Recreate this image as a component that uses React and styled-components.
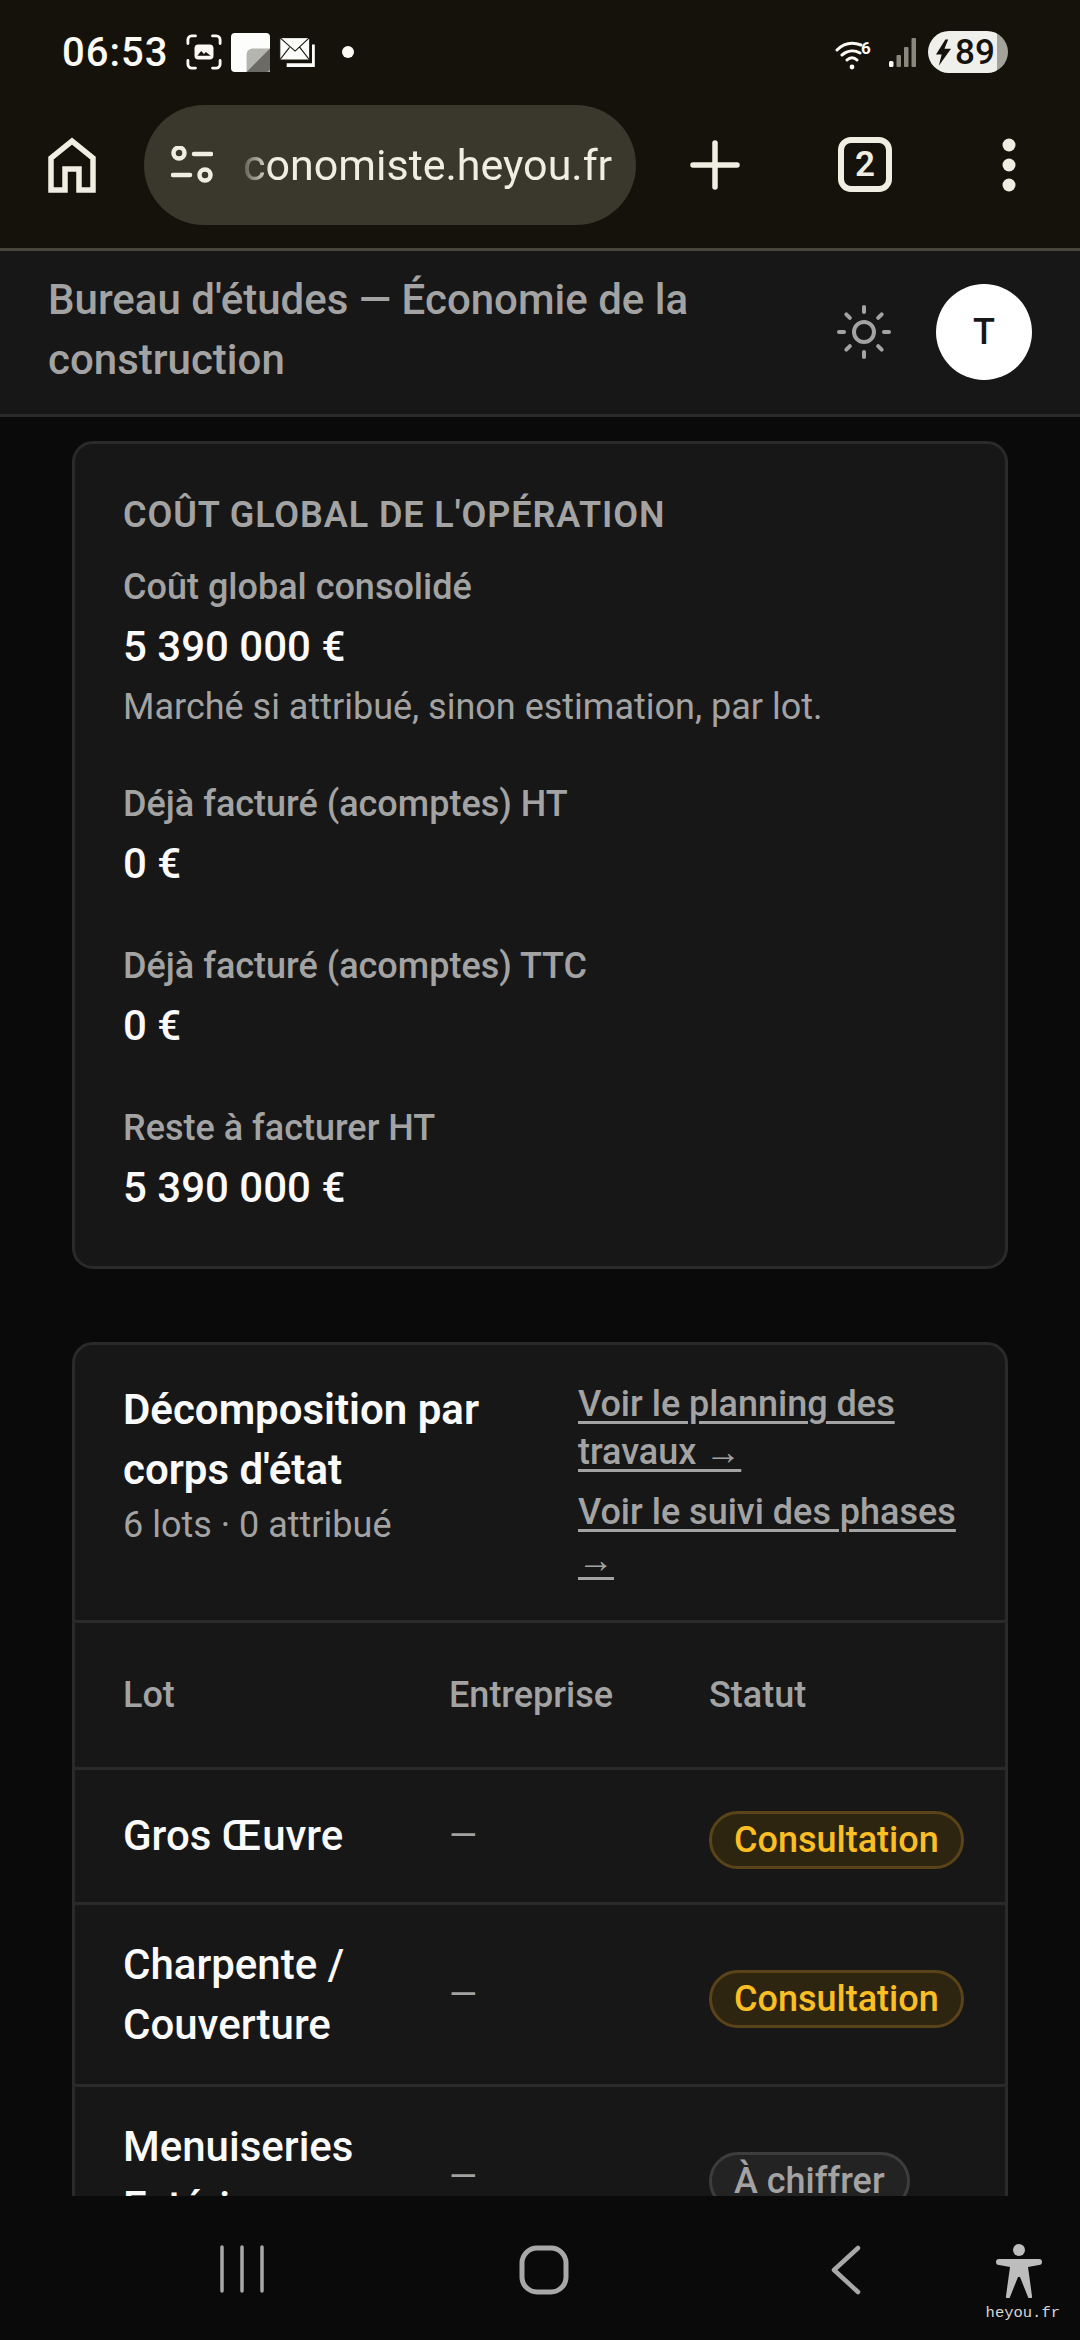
import React from "react";
import styled, { createGlobalStyle } from "styled-components";
import { Sun } from "lucide-react";

const GlobalStyle = createGlobalStyle`
    html, body {
        margin: 0;
        padding: 0;
        background: #0a0a0a;
    }
    * {
        box-sizing: border-box;
    }
`;

const Shell = styled.div`
    width: 1080px;
    height: 2340px;
    display: flex;
    flex-direction: column;
    overflow: hidden;
    position: relative;
    background: #0a0a0a;
    font-family: Roboto, "Liberation Sans", sans-serif;
`;

const Chrome = styled.div`
    height: 251px;
    flex: none;
    background: #14120a;
    border-bottom: 3px solid #4a453c;
`;

const StatusBar = styled.div`
    height: 105px;
    padding: 28px 72px 0 62px;
    display: flex;
    align-items: flex-start;
    justify-content: space-between;
`;

const StatusGroup = styled.div`
    display: flex;
    align-items: center;
    height: 48px;
`;

const Clock = styled.span`
    font-size: 40px;
    font-weight: 500;
    letter-spacing: 1px;
    color: #fbfaf5;
    margin-right: 18px;
`;

const BatteryPill = styled.div`
    width: 80px;
    height: 42px;
    border-radius: 21px;
    margin-left: 12px;
    display: flex;
    align-items: center;
    gap: 4px;
    padding-left: 8px;
    font-size: 35px;
    font-weight: 500;
    color: #14120a;
    background: linear-gradient(to right, #efefeb 0, #efefeb 69px, #a3a39c 69px);
`;

const Toolbar = styled.div`
    height: 143px;
    padding: 0 0 24px 48px;
    display: flex;
    align-items: center;
`;

const UrlPill = styled.div`
    width: 492px;
    height: 120px;
    margin-left: 48px;
    border-radius: 60px;
    background: #3a372c;
    padding-left: 27px;
    display: flex;
    align-items: center;
    gap: 30px;
`;

const UrlText = styled.span`
    font-size: 43px;
    color: #f0ede2;
    white-space: nowrap;
    -webkit-mask-image: linear-gradient(to right, rgba(0, 0, 0, 0.2), #000 28px);
    mask-image: linear-gradient(to right, rgba(0, 0, 0, 0.2), #000 28px);
`;

const ToolButton = styled.div`
    width: ${(p) => p.$width}px;
    margin-left: ${(p) => p.$left}px;
    display: flex;
    align-items: center;
    justify-content: center;
    flex: none;
`;

const TabCount = styled.div`
    width: 54px;
    height: 55px;
    border: 6px solid #f0ede2;
    border-radius: 13px;
    color: #f0ede2;
    font-size: 35px;
    font-weight: 600;
    display: flex;
    align-items: center;
    justify-content: center;
`;

const AppHeader = styled.header`
    height: 166px;
    flex: none;
    background: #171717;
    border-bottom: 3px solid #2a2a2a;
    padding: 0 48px 2px;
    display: flex;
    align-items: center;
`;

const AppTitle = styled.h1`
    flex: 1;
    margin: 0 0 3px;
    max-width: 700px;
    font-size: 42px;
    line-height: 60px;
    font-weight: 500;
    color: #a3a3a3;
`;

const SunButton = styled.div`
    margin-left: auto;
    margin-right: 42px;
    width: 60px;
    height: 60px;
    color: #a3a3a3;
`;

const Avatar = styled.div`
    width: 96px;
    height: 96px;
    border-radius: 50%;
    background: #fff;
    color: #171717;
    font-size: 36px;
    font-weight: 500;
    display: flex;
    align-items: center;
    justify-content: center;
`;

const Main = styled.main`
    flex: 1;
    min-height: 0;
    overflow: hidden;
    padding: 24px 72px 0;
    display: flex;
    flex-direction: column;
    gap: 73px;
`;

const Card = styled.section`
    flex: none;
    background: #171717;
    border: 3px solid #2a2a2a;
    border-radius: 21px;
`;

const SummaryBody = styled.div`
    padding: 45px 48px 45px;
`;

const SummaryTitle = styled.h2`
    margin: 0 0 20px;
    font-size: 36px;
    line-height: 52px;
    font-weight: 600;
    letter-spacing: 0.9px;
    text-transform: uppercase;
    color: #a3a3a3;
`;

const Stat = styled.div`
    margin-bottom: 43px;
    &:last-child {
        margin-bottom: 0;
    }
`;

const StatLabel = styled.div`
    font-size: 36px;
    line-height: 52px;
    font-weight: 500;
    color: #a3a3a3;
`;

const StatValue = styled.div`
    font-size: 42px;
    line-height: 67px;
    font-weight: 500;
    color: #fafafa;
`;

const StatNote = styled.div`
    font-size: 36px;
    line-height: 55px;
    color: #a3a3a3;
`;

const LotsHeader = styled.div`
    height: 278px;
    padding: 35px 27px 0 48px;
    display: flex;
    justify-content: space-between;
    border-bottom: 3px solid #2a2a2a;
`;

const LotsTitle = styled.h2`
    margin: 0;
    width: 380px;
    font-size: 42px;
    line-height: 60px;
    font-weight: 600;
    color: #fafafa;
`;

const LotsSub = styled.div`
    font-size: 36px;
    line-height: 50px;
    color: #a3a3a3;
`;

const Links = styled.div`
    width: 400px;
    display: flex;
    flex-direction: column;
    gap: 12px;
`;

const LotLink = styled.a`
    font-size: 36px;
    line-height: 48px;
    font-weight: 500;
    color: #a3a3a3;
    text-decoration: underline;
    text-decoration-thickness: 3px;
    text-underline-offset: 5px;
`;

const Row = styled.div`
    display: grid;
    grid-template-columns: 326px 260px 1fr;
    align-items: center;
    padding-left: 48px;
    min-height: ${(p) => p.$height}px;
    border-bottom: 3px solid #2a2a2a;
`;

const HeadCell = styled.div`
    font-size: 36px;
    font-weight: 500;
    color: #a3a3a3;
`;

const LotName = styled.div`
    font-size: 42px;
    line-height: 60px;
    font-weight: 500;
    color: #fafafa;
    width: 300px;
`;

const Dash = styled.div`
    font-size: 36px;
    color: #a3a3a3;
`;

const Badge = styled.span`
    justify-self: start;
    height: 58px;
    margin-top: 8px;
    padding: 0 22px;
    border-radius: 29px;
    font-size: 36px;
    font-weight: 500;
    display: inline-flex;
    align-items: center;
    white-space: nowrap;
    color: ${(p) => (p.$tone === "amber" ? "#fbbf24" : "#a3a3a3")};
    background: ${(p) => (p.$tone === "amber" ? "#2e2511" : "#232323")};
    border: 3px solid ${(p) => (p.$tone === "amber" ? "#5a4318" : "#3d3d3d")};
`;

const NavBar = styled.nav`
    height: 144px;
    flex: none;
    background: #0a0a0a;
    padding: 49px 0 0 212px;
    display: flex;
    align-items: flex-start;
    gap: 242px;
`;

const NavItem = styled.div`
    width: 60px;
    height: 50px;
    display: flex;
    justify-content: center;
    color: #a8a8a8;
`;

const AccessBadge = styled.div`
    position: absolute;
    left: 995px;
    top: 2244px;
    width: 48px;
    height: 54px;
`;

const Watermark = styled.span`
    position: absolute;
    right: 20px;
    bottom: 19px;
    font-family: "Liberation Mono", "DejaVu Sans Mono", monospace;
    font-size: 15.5px;
    line-height: 16px;
    color: #d6d6d6;
`;

const Dot = styled.span`
    width: 12px;
    height: 12px;
    border-radius: 50%;
    background: #fbfaf5;
    margin-left: 27px;
`;

const lots = [
    { name: "Gros Œuvre", height: 135, tone: "amber", status: "Consultation" },
    { name: "Charpente / Couverture", height: 182, tone: "amber", status: "Consultation" },
    { name: "Menuiseries Extérieures", height: 182, tone: "grey", status: "À chiffrer" },
];

const stats = [
    { label: "Déjà facturé (acomptes) HT", value: "0 €" },
    { label: "Déjà facturé (acomptes) TTC", value: "0 €" },
    { label: "Reste à facturer HT", value: "5 390 000 €" },
];

const GalleryIcon = () => (
    <svg width="36" height="36" viewBox="0 0 38 38" fill="none" stroke="#fbfaf5" strokeWidth="3" strokeLinecap="round">
        <path d="M2 10V6a4 4 0 0 1 4-4h4M28 2h4a4 4 0 0 1 4 4v4M36 28v4a4 4 0 0 1-4 4h-4M10 36H6a4 4 0 0 1-4-4v-4" />
        <rect x="9" y="11" width="20" height="16" rx="4" fill="#fbfaf5" stroke="none" />
        <path d="M12 23l4-5 3 3 2-2 5 4z" fill="#14120a" stroke="none" />
    </svg>
);

const NoteIcon = () => (
    <svg width="39" height="39" viewBox="0 0 40 40" style={{ marginLeft: 9 }}>
        <rect width="40" height="40" rx="4" fill="#fdfdfb" />
        <path d="M16 40V22a6 6 0 0 1 6-6h18v24z" fill="#b5b5b0" />
        <path d="M40 16v20a4 4 0 0 1-4 4H16z" fill="#6b6a65" />
    </svg>
);

const MailIcon = () => (
    <svg width="36" height="30" viewBox="0 0 38 32" style={{ marginLeft: 9 }}>
        <path d="M8 28h27V8h3v24H8z" fill="#fdfdfb" />
        <rect x="0.6" y="0.6" width="32" height="24" fill="#fdfdfb" stroke="#14120a" strokeWidth="1.2" />
        <path d="M1 1l16 14L32 1M1 24l10-13M32 24L22 11" fill="none" stroke="#14120a" strokeWidth="1.2" />
    </svg>
);

const WifiIcon = () => (
    <svg width="38" height="36" viewBox="0 -6 38 36" fill="none" stroke="#fbfaf5" strokeWidth="3" strokeLinecap="round">
        <path d="M2 10C9 3 18 2 26 5M7 15c6-5 13-5 18-2M12 20c3-3 7-3 10 0" />
        <circle cx="17" cy="27" r="2.4" fill="#fbfaf5" stroke="none" />
        <text x="26" y="14" fontSize="17" fontWeight="700" fill="#fbfaf5" stroke="none" fontFamily="Roboto">6</text>
    </svg>
);

const SignalIcon = () => (
    <svg width="27" height="30" viewBox="0 0 27 30" style={{ marginLeft: 16 }}>
        <rect x="0" y="24" width="4.5" height="6" rx="1.5" fill="#fbfaf5" />
        <rect x="7.5" y="18" width="4.5" height="12" rx="1" fill="#8a877d" />
        <rect x="15" y="10" width="4.5" height="20" rx="1" fill="#8a877d" />
        <rect x="22.5" y="1" width="4.5" height="29" rx="1" fill="#8a877d" />
    </svg>
);

const BoltIcon = () => (
    <svg width="15" height="27" viewBox="0 0 16 28">
        <path d="M10 0L0 16h6L3 28 16 10H9l4-10z" fill="#14120a" />
    </svg>
);

const HomeIcon = () => (
    <svg width="48" height="56" viewBox="0 0 48 56" fill="none" stroke="#f0ede2" strokeWidth="5.5">
        <path d="M3 53V21L24 4l21 17v32H31V32H17v21z" strokeLinejoin="miter" />
    </svg>
);

const TuneIcon = () => (
    <svg width="42" height="37" viewBox="0 0 42 37" fill="none" stroke="#f0ede2" strokeWidth="4.5" strokeLinecap="round">
        <circle cx="8" cy="7" r="5.5" />
        <path d="M23 8h17M2 29h17" />
        <circle cx="34" cy="29" r="5.5" />
    </svg>
);

const PlusIcon = () => (
    <svg width="50" height="50" viewBox="0 0 50 50" stroke="#f0ede2" strokeWidth="5.5" strokeLinecap="round">
        <path d="M25 3v44M3 25h44" />
    </svg>
);

const MoreIcon = () => (
    <svg width="14" height="54" viewBox="0 0 14 54" fill="#f0ede2">
        <circle cx="7" cy="7" r="6.5" />
        <circle cx="7" cy="27" r="6.5" />
        <circle cx="7" cy="47" r="6.5" />
    </svg>
);

const AccessIcon = () => (
    <svg width="48" height="54" viewBox="0 0 48 54" fill="#bdbdbd">
        <circle cx="24" cy="6" r="6" />
        <path d="M4 15h40a2.5 2.5 0 0 1 0 6l-11 2 4 29a2 2 0 0 1-4 1l-8-20h-2l-8 20a2 2 0 0 1-4-1l4-29-11-2a2.5 2.5 0 0 1 0-6z" />
    </svg>
);

const App = () => {
    return (
        <Shell>
            <GlobalStyle />
            <Chrome>
                <StatusBar>
                    <StatusGroup>
                        <Clock>06:53</Clock>
                        <GalleryIcon />
                        <NoteIcon />
                        <MailIcon />
                        <Dot />
                    </StatusGroup>
                    <StatusGroup>
                        <WifiIcon />
                        <SignalIcon />
                        <BatteryPill>
                            <BoltIcon />
                            89
                        </BatteryPill>
                    </StatusGroup>
                </StatusBar>
                <Toolbar>
                    <HomeIcon />
                    <UrlPill>
                        <TuneIcon />
                        <UrlText>conomiste.heyou.fr</UrlText>
                    </UrlPill>
                    <ToolButton $width={50} $left={54}>
                        <PlusIcon />
                    </ToolButton>
                    <ToolButton $width={54} $left={98}>
                        <TabCount>2</TabCount>
                    </ToolButton>
                    <ToolButton $width={14} $left={110}>
                        <MoreIcon />
                    </ToolButton>
                </Toolbar>
            </Chrome>

            <AppHeader>
                <AppTitle>Bureau d'études — Économie de la construction</AppTitle>
                <SunButton>
                    <Sun size={60} strokeWidth={1.6} />
                </SunButton>
                <Avatar>T</Avatar>
            </AppHeader>

            <Main>
                <Card>
                    <SummaryBody>
                        <SummaryTitle>Coût global de l'opération</SummaryTitle>
                        <Stat>
                            <StatLabel>Coût global consolidé</StatLabel>
                            <StatValue>5 390 000 €</StatValue>
                            <StatNote>Marché si attribué, sinon estimation, par lot.</StatNote>
                        </Stat>
                        {stats.map((s) => (
                            <Stat key={s.label}>
                                <StatLabel>{s.label}</StatLabel>
                                <StatValue>{s.value}</StatValue>
                            </Stat>
                        ))}
                    </SummaryBody>
                </Card>

                <Card>
                    <LotsHeader>
                        <div>
                            <LotsTitle>Décomposition par corps d'état</LotsTitle>
                            <LotsSub>6 lots · 0 attribué</LotsSub>
                        </div>
                        <Links>
                            <LotLink>Voir le planning des travaux →</LotLink>
                            <LotLink>Voir le suivi des phases →</LotLink>
                        </Links>
                    </LotsHeader>
                    <Row $height={147}>
                        <HeadCell>Lot</HeadCell>
                        <HeadCell>Entreprise</HeadCell>
                        <HeadCell>Statut</HeadCell>
                    </Row>
                    {lots.map((lot) => (
                        <Row key={lot.name} $height={lot.height}>
                            <LotName>{lot.name}</LotName>
                            <Dash>—</Dash>
                            <Badge $tone={lot.tone}>{lot.status}</Badge>
                        </Row>
                    ))}
                </Card>
            </Main>

            <NavBar>
                <NavItem>
                    <svg width="44" height="48" viewBox="0 0 44 48" stroke="currentColor" strokeWidth="3.5" strokeLinecap="round">
                        <path d="M2 2v44M22 2v44M42 2v44" />
                    </svg>
                </NavItem>
                <NavItem>
                    <svg width="50" height="50" viewBox="0 0 50 50" fill="none" stroke="currentColor" strokeWidth="5">
                        <rect x="3" y="3" width="44" height="44" rx="15" />
                    </svg>
                </NavItem>
                <NavItem>
                    <svg width="30" height="50" viewBox="0 0 30 50" fill="none" stroke="currentColor" strokeWidth="4.5" strokeLinecap="round" strokeLinejoin="round">
                        <path d="M27 3L3 25l24 22" />
                    </svg>
                </NavItem>
            </NavBar>
            <AccessBadge>
                <AccessIcon />
            </AccessBadge>
            <Watermark>heyou.fr</Watermark>
        </Shell>
    );
};

export default App;
